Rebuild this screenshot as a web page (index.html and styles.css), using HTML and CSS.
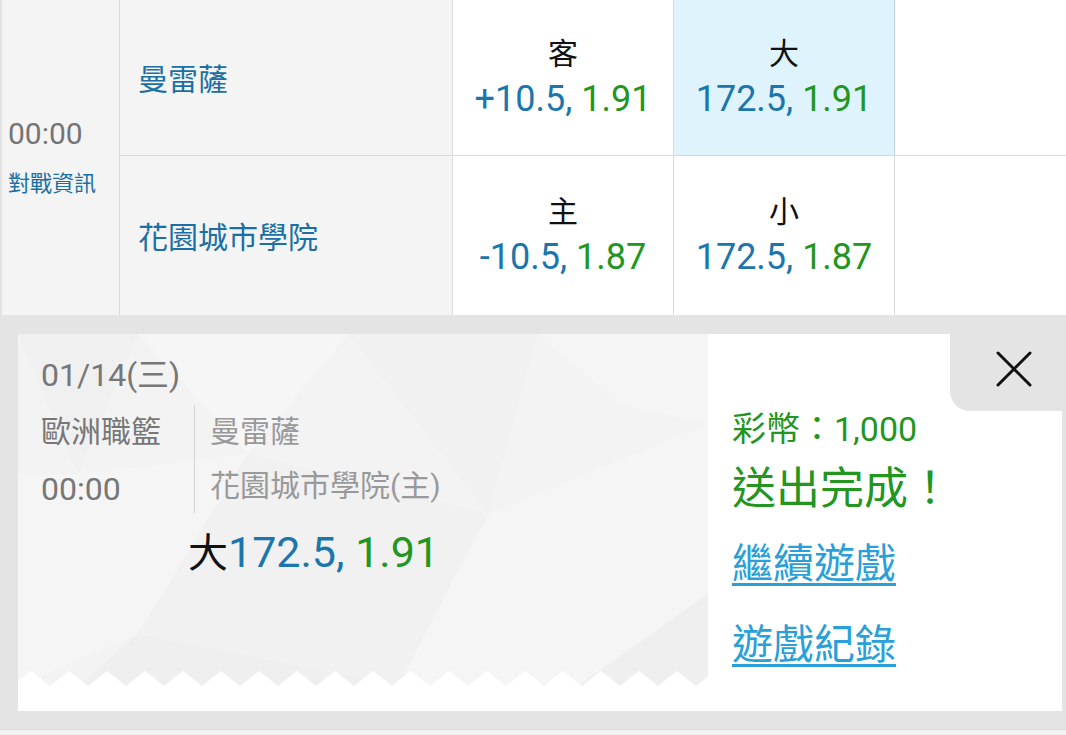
FILE: index.html
```html
<!DOCTYPE html>
<html lang="zh-Hant">
<head>
<meta charset="utf-8">
<title>送出完成</title>
<link rel="stylesheet" href="styles.css">
</head>
<body>
<div class="page">
  <div class="match">
    <div class="cell time-cell">
      <div class="time">00:00</div>
      <div class="info-link">對戰資訊</div>
    </div>
    <div class="cell team top">曼雷薩</div>
    <div class="cell odds top">
      <div class="label">客</div>
      <div class="nums"><span class="blue">+10.5,</span> <span class="green">1.91</span></div>
    </div>
    <div class="cell odds top selected">
      <div class="label">大</div>
      <div class="nums"><span class="blue">172.5,</span> <span class="green">1.91</span></div>
    </div>
    <div class="cell blank top"></div>

    <div class="cell team">花園城市學院</div>
    <div class="cell odds">
      <div class="label">主</div>
      <div class="nums"><span class="blue">-10.5,</span> <span class="green">1.87</span></div>
    </div>
    <div class="cell odds">
      <div class="label">小</div>
      <div class="nums"><span class="blue">172.5,</span> <span class="green">1.87</span></div>
    </div>
    <div class="cell blank"></div>
  </div>

  <div class="tray">
    <div class="card">
      <div class="ticket">
        <div class="ticket-body">
          <svg class="facets" viewBox="0 0 690 352" preserveAspectRatio="none" aria-hidden="true">
            <rect width="690" height="352" fill="#f3f3f3"/>
            <polygon points="0,0 120,0 60,140" fill="#f0f0f0"/>
            <polygon points="120,0 330,0 230,120" fill="#f6f6f6"/>
            <polygon points="330,0 520,0 470,180" fill="#f1f1f1"/>
            <polygon points="520,0 690,0 690,90 600,70" fill="#f5f5f5"/>
            <polygon points="0,140 60,140 230,120 120,300 0,352" fill="#f5f5f5"/>
            <polygon points="230,120 470,180 380,352 120,300" fill="#f1f1f1"/>
            <polygon points="470,180 690,90 690,260 560,352 380,352" fill="#f5f5f5"/>
            <polygon points="560,352 690,260 690,352" fill="#efefef"/>
            <polygon points="120,300 380,352 60,352" fill="#efefef"/>
          </svg>
          <div class="ticket-text">
            <div class="date">01/14(三)</div>
            <div class="game">
              <div class="league">
                <div class="league-name">歐洲職籃</div>
                <div class="league-time">00:00</div>
              </div>
              <div class="teams">
                <div>曼雷薩</div>
                <div>花園城市學院(主)</div>
              </div>
            </div>
            <div class="pick"><span class="pick-side">大</span><span class="pick-nums"><span class="blue">172.5,</span> <span class="green">1.91</span></span></div>
          </div>
          <svg class="zigzag" viewBox="0 0 690 15" preserveAspectRatio="none" aria-hidden="true">
            <defs>
              <pattern id="teeth" width="38" height="15" patternUnits="userSpaceOnUse" x="-6">
                <polygon points="0,15 19,0 38,15" fill="#ffffff"/>
              </pattern>
            </defs>
            <rect width="690" height="15" fill="url(#teeth)"/>
          </svg>
        </div>
      </div>
      <div class="result">
        <div class="amount">彩幣：1,000</div>
        <div class="done">送出完成！</div>
        <a class="action" href="#">繼續遊戲</a>
        <a class="action" href="#">遊戲紀錄</a>
      </div>
      <button class="close" type="button" aria-label="關閉">
        <svg viewBox="0 0 36 36" width="36" height="36" aria-hidden="true">
          <path d="M2 2 L34 34 M34 2 L2 34" stroke="#111" stroke-width="3" stroke-linecap="round" fill="none"/>
        </svg>
      </button>
    </div>
  </div>
  <div class="next-row"></div>
</div>
</body>
</html>
```

FILE: styles.css
```css
* { box-sizing: border-box; }

html, body {
  margin: 0;
  padding: 0;
  background: #e4e4e4;
  font-family: "Roboto", "Noto Sans CJK TC", sans-serif;
}

.page {
  width: 1066px;
  height: 735px;
  overflow: hidden;
}

.blue { color: #1b76ad; }
.green { color: #22961f; }

/* ---------- match table ---------- */
.match {
  display: grid;
  grid-template-columns: 118px 333px 221px 221px 1fr;
  grid-template-rows: 156px 159px;
  border-left: 2px solid #e2e2e2;
}

.cell {
  border-right: 1px solid #dcdcdc;
}

.cell.top {
  border-bottom: 1px solid #cfdce4;
}

.time-cell {
  grid-row: 1 / span 2;
  background: #f4f4f4;
  display: flex;
  flex-direction: column;
  justify-content: center;
  padding-left: 6px;
}

.time {
  font-size: 30px;
  line-height: 40px;
  color: #747474;
}

.info-link {
  margin-top: 12px;
  font-size: 22px;
  line-height: 36px;
  color: #1b6fa3;
}

.team {
  background: #f4f4f4;
  display: flex;
  align-items: center;
  padding-left: 18px;
  padding-bottom: 2px;
  font-size: 30px;
  color: #1b6fa3;
}

.odds {
  background: #ffffff;
  display: flex;
  flex-direction: column;
  align-items: center;
  justify-content: center;
  padding-bottom: 2px;
}

.odds.selected {
  background: #dff3fc;
  border-right-color: #bfd6e2;
}

.label {
  font-size: 30px;
  line-height: 44px;
  color: #111;
}

.nums {
  font-size: 36px;
  line-height: 46px;
  white-space: nowrap;
}

.blank {
  background: #ffffff;
  border-right: none;
}

/* ---------- result tray ---------- */
.tray {
  padding: 19px 4px 18px 18px;
}

.card {
  position: relative;
  display: flex;
  height: 377px;
  background: #ffffff;
}

.ticket {
  width: 690px;
}

.ticket-body {
  position: relative;
  height: 352px;
}

.facets {
  position: absolute;
  inset: 0;
  width: 100%;
  height: 100%;
  display: block;
}

.zigzag {
  position: absolute;
  left: 0;
  bottom: 0;
  width: 690px;
  height: 15px;
  display: block;
}

.ticket-text {
  position: relative;
  padding: 21px 0 0 23px;
}

.date {
  font-size: 32px;
  line-height: 40px;
  color: #777;
}

.game {
  display: flex;
  align-items: flex-start;
  margin-top: 10px;
}

.league {
  width: 153px;
  height: 108px;
  color: #777;
}

.league-name {
  font-size: 30px;
  line-height: 54px;
}

.league-time {
  margin-top: 6px;
  font-size: 32px;
  line-height: 48px;
}

.teams {
  border-left: 1px solid #d4d4d4;
  padding-left: 15px;
  font-size: 30px;
  line-height: 54px;
  color: #999;
}

.pick {
  margin: 14px 0 0 147px;
  font-size: 40px;
  line-height: 50px;
  white-space: nowrap;
}

.pick-side {
  color: #111;
}

.pick-nums {
  font-size: 43px;
}

.result {
  flex: 1;
  padding: 73px 0 0 24px;
  display: flex;
  flex-direction: column;
  align-items: flex-start;
}

.amount {
  font-size: 34px;
  line-height: 44px;
  color: #22961f;
}

.done {
  margin-top: 9px;
  font-size: 44px;
  line-height: 58px;
  color: #22961f;
}

.action {
  margin-top: 18px;
  font-size: 41px;
  line-height: 56px;
  color: #2a9fd9;
  text-decoration: underline;
  text-decoration-thickness: 3px;
  text-underline-offset: 5px;
}

.action + .action {
  margin-top: 25px;
}

.close {
  position: absolute;
  top: 0;
  right: 0;
  width: 112px;
  height: 77px;
  border: none;
  padding: 17px 0 0 46px;
  background: #e4e4e4;
  border-bottom-left-radius: 20px;
  display: flex;
  align-items: flex-start;
  justify-content: flex-start;
  cursor: pointer;
}

.close svg {
  display: block;
}

.next-row {
  height: 6px;
  border-top: 1px solid #dcdcdc;
  background: #f2f2f2;
}
```
